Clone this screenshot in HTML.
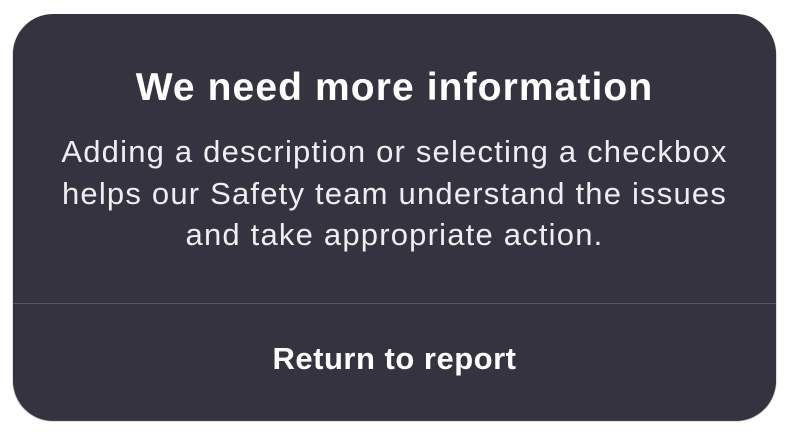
<!DOCTYPE html>
<html><head><meta charset="utf-8"><style>
html,body{margin:0;padding:0;background:#fff;width:788px;height:432px;overflow:hidden}
.card{position:absolute;left:13px;top:14px;width:763px;height:406px;background:#34333f;border-radius:40px;font-family:"Liberation Sans",sans-serif;color:#fff;text-align:center;box-shadow:0 1px 1px #222}
h1{position:absolute;top:52px;left:0;right:0;margin:0;font-size:39px;font-weight:bold;letter-spacing:1.1px;white-space:nowrap}
p{position:absolute;top:117px;left:0;right:0;margin:0;font-size:31px;line-height:41.5px;color:#eeeef0;letter-spacing:1.2px;white-space:nowrap}
.div{position:absolute;top:289px;left:0;right:0;height:1px;background:#55545f}
.btn{position:absolute;top:327px;left:0;right:0;font-size:31px;font-weight:bold;letter-spacing:0.5px}
</style></head><body>
<div class="card">
<h1>We need more information</h1>
<p>Adding a description or selecting a checkbox<br>helps our Safety team understand the issues<br>and take appropriate action.</p>
<div class="div"></div>
<div class="btn">Return to report</div>
</div>
</body></html>
